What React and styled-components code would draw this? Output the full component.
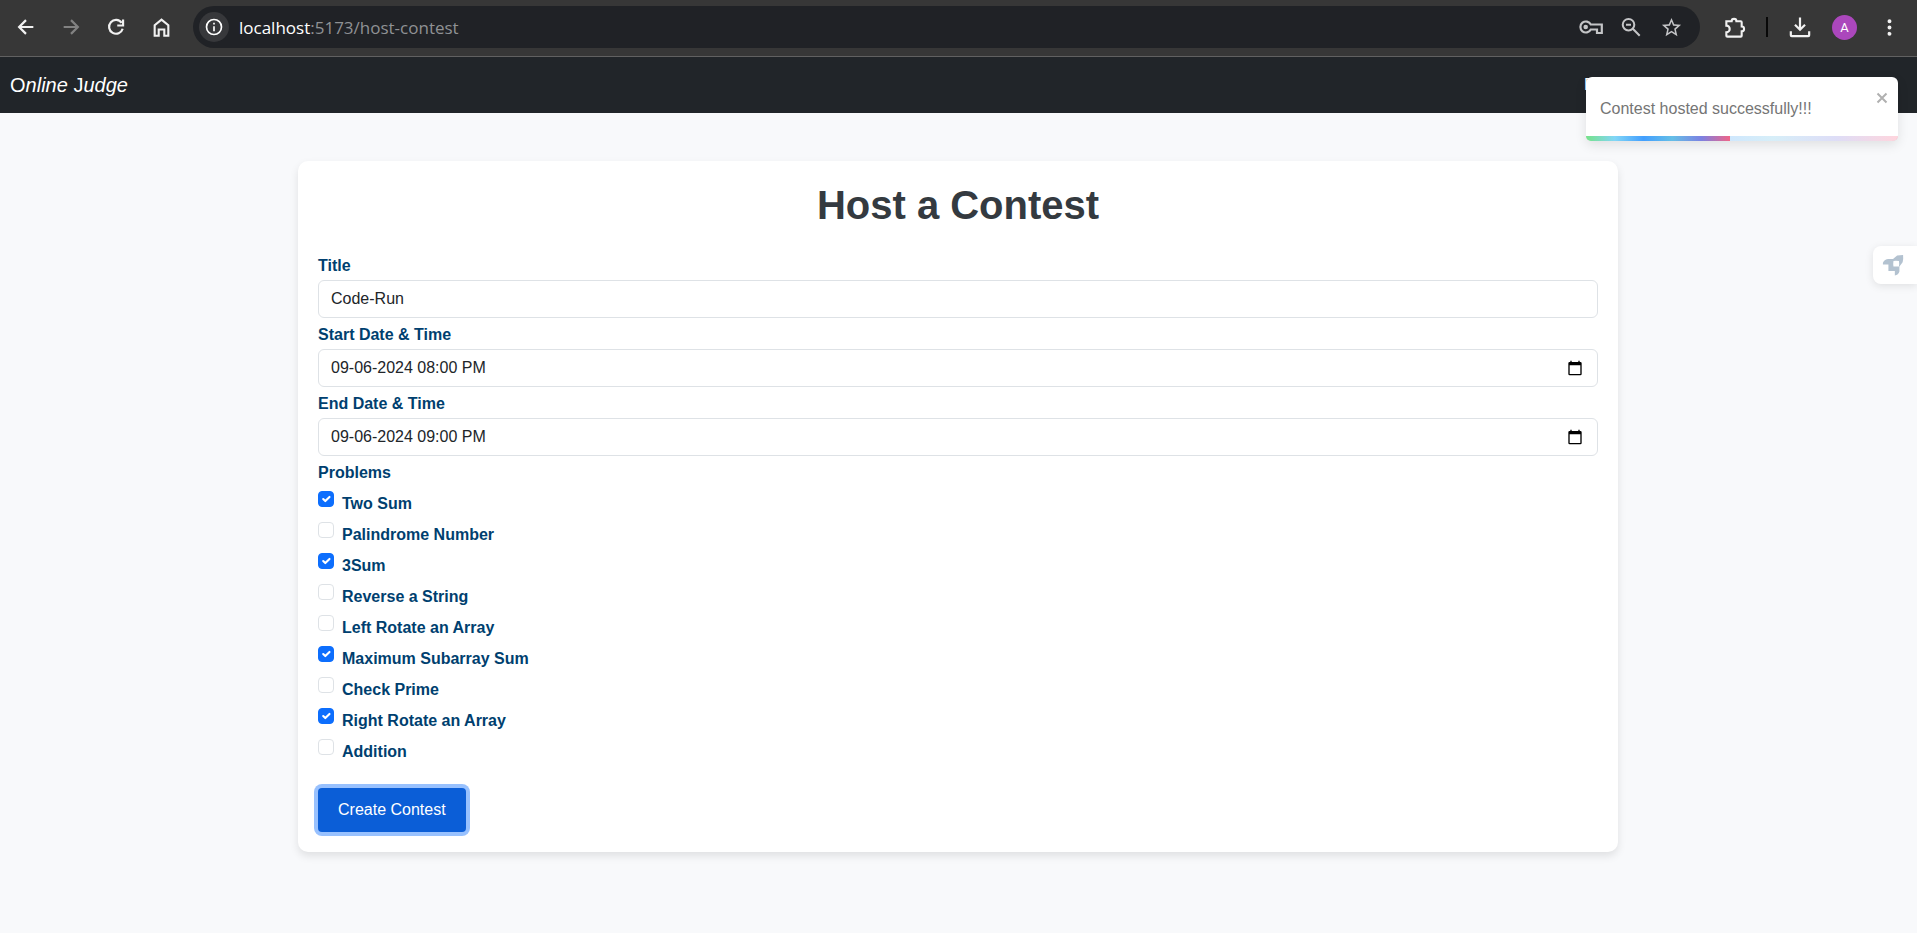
import React, { useState } from 'react';
import styled, { createGlobalStyle } from 'styled-components';

const GlobalStyle = createGlobalStyle`
  *, *::before, *::after { box-sizing: border-box; }
  body {
    margin: 0;
    background: #f8f9fb;
    color: #212529;
    font: 16px/24px "Liberation Sans", Arial, sans-serif;
  }
  button, input { font: inherit; }
`;

const Toolbar = styled.header`
  display: flex;
  align-items: center;
  height: 57px;
  padding: 6px 14px 8px 12px;
  background: #373737;
  border-bottom: 1px solid #616161;
`;

const IconButton = styled.button`
  display: grid;
  place-items: center;
  flex: none;
  width: 28px;
  height: 28px;
  padding: 0;
  border: 0;
  background: none;
  color: ${({ $color }) => $color || '#f1f1f1'};
`;

const Group = styled.div`
  display: flex;
  align-items: center;
  gap: ${({ $gap }) => $gap}px;
`;

const AddressBar = styled.div`
  display: flex;
  flex: 1;
  align-items: center;
  height: 42px;
  margin: 0 20px 0 18px;
  padding: 0 15px 0 6px;
  border-radius: 21px;
  background: #202226;
`;

const SiteInfo = styled.button`
  display: grid;
  place-items: center;
  width: 30px;
  height: 30px;
  padding: 0;
  border: 0;
  border-radius: 50%;
  background: #37383b;
  color: #fff;
`;

const Address = styled.div`
  flex: 1;
  margin-left: 10px;
  padding-top: 1px;
  color: #8f9194;
  font: 17px/24px "Open Sans", "Noto Sans", sans-serif;
  b { color: #fff; font-weight: 400; }
`;

const Divider = styled.span`
  width: 2px;
  height: 20px;
  background: #080808;
`;

const Avatar = styled.button`
  width: 25px;
  height: 25px;
  padding: 0;
  border: 0;
  border-radius: 50%;
  background: #ab47bc;
  color: #fff;
  font: 13px/25px Roboto, sans-serif;
`;

const Navbar = styled.nav`
  display: flex;
  align-items: center;
  justify-content: space-between;
  height: 56px;
  padding: 0 10px;
  background: #212529;
`;

const Brand = styled.a`
  color: #fff;
  font-size: 20px;
  line-height: 30px;
  text-decoration: none;
`;

const NavLinks = styled.div`
  width: 323px;
`;

const NavLink = styled.a`
  color: #fff;
  text-decoration: none;
`;

const Page = styled.main`
  padding: 48px 13px 80px 12px;
`;

const Card = styled.form`
  max-width: 1320px;
  margin: 0 auto;
  padding: 20px;
  border-radius: 10px;
  background: #fff;
  box-shadow: 0 4px 8px rgba(0, 0, 0, 0.1);
`;

const Heading = styled.h1`
  margin: 0 0 20px;
  color: #343a40;
  font-size: 40px;
  line-height: 48px;
  text-align: center;
`;

const Label = styled.label`
  display: block;
  padding: 5px 0 2px;
  color: #003f6f;
  font-weight: 700;
`;

const Problems = styled.fieldset`
  margin: 0 0 22px;
  padding: 0;
  border: 0;
`;

const Legend = styled(Label).attrs({ as: 'legend' })``;

const Field = styled.div`
  display: flex;
  align-items: center;
  height: 38px;
  padding-right: 12px;
  border: 1px solid #dee2e6;
  border-radius: 6px;
`;

const TextInput = styled.input`
  flex: 1;
  min-width: 0;
  padding: 0 12px;
  border: 0;
  outline: 0;
  background: none;
  color: #212529;
`;

const PickerButton = styled.button`
  display: grid;
  place-items: center;
  width: 20px;
  height: 20px;
  padding: 0;
  border: 0;
  background: none;
  color: #000;
`;

const CheckRow = styled.div`
  display: flex;
  gap: 8px;
`;

const Checkbox = styled.input.attrs({ type: 'checkbox' })`
  appearance: none;
  flex: none;
  width: 16px;
  height: 16px;
  margin: 4px 0 0;
  border: 1px solid #dee2e6;
  border-radius: 4px;
  background: #fff center / 14px no-repeat;
  &:checked {
    border-color: #0d6efd;
    background-color: #0d6efd;
    background-image: url("data:image/svg+xml,%3csvg xmlns='http://www.w3.org/2000/svg' viewBox='0 0 20 20'%3e%3cpath fill='none' stroke='%23fff' stroke-linecap='round' stroke-linejoin='round' stroke-width='3' d='m6 10 3 3 6-6'/%3e%3c/svg%3e");
  }
`;

const SubmitButton = styled.button`
  display: block;
  height: 44px;
  padding: 0 20px;
  border: 0;
  border-radius: 4px;
  background: #0b5ed7;
  box-shadow: 0 0 0 4px #98c1fe;
  color: #fff;
`;

const Toast = styled.div`
  position: absolute;
  top: 77px;
  right: 19px;
  width: 312px;
  height: 64px;
  border-radius: 6px;
  background: #fff;
  box-shadow: 0 4px 12px rgba(0, 0, 0, 0.1);
  color: #757575;
`;

const ToastBody = styled.div`
  padding: 20px 14px;
`;

const CloseButton = styled.button`
  position: absolute;
  top: 14px;
  right: 9px;
  display: grid;
  place-items: center;
  width: 14px;
  height: 14px;
  padding: 0;
  border: 0;
  background: none;
  color: #b0b0b0;
`;

const ProgressTrack = styled.div`
  position: absolute;
  bottom: 0;
  left: 0;
  width: 100%;
  height: 5px;
  overflow: hidden;
  border-radius: 0 0 6px 6px;
`;

const Progress = styled.div`
  position: absolute;
  inset: 0 auto 0 0;
  width: ${({ $width }) => $width};
  opacity: ${({ $opacity }) => $opacity};
  background: linear-gradient(to right, #4cd964, #5ac8fa, #007aff, #34aadc, #5856d6, #ff2d55);
`;

const SideTab = styled.button`
  position: absolute;
  top: 246px;
  right: 0;
  display: flex;
  align-items: center;
  width: 44px;
  height: 38px;
  padding: 0 9px;
  border: 0;
  border-radius: 8px 0 0 8px;
  background: #fff;
  box-shadow: 0 2px 8px rgba(0, 0, 0, 0.1);
  color: #b3c2d0;
`;

const SOLID = {
  info: 'M11 7h2v2h-2zm0 4h2v6h-2zm1-9a10 10 0 1 0 0 20 10 10 0 0 0 0-20zm0 18a8 8 0 1 1 0-16 8 8 0 0 1 0 16z',
  star: 'm22 9.24-7.19-.62L12 2 9.19 8.63 2 9.24l5.46 4.73L5.82 21 12 17.27 18.18 21l-1.63-7.03zM12 15.4l-3.76 2.27 1-4.28-3.32-2.88 4.38-.38L12 6.1l1.71 4.04 4.38.38-3.32 2.88 1 4.28z',
  more: 'M12 7.8a1.9 1.9 0 1 0 0-3.8 1.9 1.9 0 0 0 0 3.8zm0 2.3a1.9 1.9 0 1 0 0 3.8 1.9 1.9 0 0 0 0-3.8zm0 6.1a1.9 1.9 0 1 0 0 3.8 1.9 1.9 0 0 0 0-3.8z',
  calendar: 'M20 3h-1V1h-2v2H7V1H5v2H4a2 2 0 0 0-2 2v16a2 2 0 0 0 2 2h16a2 2 0 0 0 2-2V5a2 2 0 0 0-2-2zm0 18H4V8h16z',
  rocket: 'M1 9.500Q3 5.500 7 5.500H12L16.500 1.500Q19 1 23 1Q23.500 6 22.500 9L19 13.500V19Q18 22.500 14 23.500V18.500H7V11.500H1zM12.500 7.500Q12 10.500 12.500 13.500Q15 14 18.500 13.500Q19 10.500 18.500 7.500Q15 7 12.500 7.500z',
};

const OUTLINE = {
  back: 'M20 12H5M12 4.5 4.5 12l7.5 7.5',
  forward: 'M4 12h15M12 4.5l7.5 7.5-7.5 7.5',
  reload: 'M18.8 7A8.3 8.3 0 1 0 20 14M20.5 3v7.2H13.5',
  home: 'M4.2 21.5V9.3L12 3l7.8 6.3v12.2h-4.6v-7.3H8.8v7.3z',
  key: 'M11.8 9.5H22.8V18H18V14.5H11.8A5.5 5.5 0 1 1 11.8 9.5zM5.5 12a1.2 1.2 0 1 0 2.4 0 1.2 1.2 0 1 0-2.4 0z',
  zoomOut: 'M3 9.5a6.3 6.3 0 1 0 12.6 0 6.3 6.3 0 1 0-12.6 0zM14 14l7.5 7.5M6.5 9.5h5.5',
  download: 'M12 1.5V15M6.5 9.5 12 15l5.5-5.5M2 16.5V21q0 1 1 1h18q1 0 1-1v-4.5',
  close: 'M3 3l18 18M21 3 3 21',
  puzzle: 'M3.5 5.5H9a2.3 2.3 0 0 1 5 0h4.5q1 0 1 1V11a2.3 2.3 0 0 1 0 5v4.5q0 1-1 1h-14q-1 0-1-1V17a3.2 3.2 0 0 0 0-7z',
};

function Icon({ name, size = 22, weight = 2.4 }) {
  const solid = SOLID[name];
  return (
    <svg width={size} height={size} viewBox="0 0 24 24" aria-hidden="true">
      {solid
        ? <path d={solid} fill="currentColor" fillRule="evenodd" />
        : <path d={OUTLINE[name]} fill="none" stroke="currentColor" strokeWidth={weight} />}
    </svg>
  );
}

const PROBLEMS = [
  ['Two Sum', true],
  ['Palindrome Number', false],
  ['3Sum', true],
  ['Reverse a String', false],
  ['Left Rotate an Array', false],
  ['Maximum Subarray Sum', true],
  ['Check Prime', false],
  ['Right Rotate an Array', true],
  ['Addition', false],
];

function DateField({ id, label, value }) {
  return (
    <>
      <Label htmlFor={id}>{label}</Label>
      <Field>
        <TextInput id={id} defaultValue={value} />
        <PickerButton type="button" aria-label={`Pick ${label}`}><Icon name="calendar" size={16} /></PickerButton>
      </Field>
    </>
  );
}

export default function App() {
  const [open, setOpen] = useState(true);
  return (
    <>
      <GlobalStyle />
      <Toolbar>
        <Group $gap={17}>
          <IconButton aria-label="Back"><Icon name="back" /></IconButton>
          <IconButton aria-label="Forward" $color="#828282"><Icon name="forward" /></IconButton>
          <IconButton aria-label="Reload"><Icon name="reload" size={20} weight={2.6} /></IconButton>
          <IconButton aria-label="Home"><Icon name="home" size={21} /></IconButton>
        </Group>
        <AddressBar>
          <SiteInfo aria-label="Site information"><Icon name="info" size={20} /></SiteInfo>
          <Address><b>localhost</b>:5173/host-contest</Address>
          <Group $gap={12}>
            <IconButton aria-label="Passwords" $color="#c4c5c7"><Icon name="key" size={24} weight={2.2} /></IconButton>
            <IconButton aria-label="Zoom" $color="#c4c5c7"><Icon name="zoomOut" size={22} weight={2.2} /></IconButton>
            <IconButton aria-label="Bookmark" $color="#c4c5c7"><Icon name="star" size={23} /></IconButton>
          </Group>
        </AddressBar>
        <Group $gap={18}>
          <IconButton aria-label="Extensions"><Icon name="puzzle" size={23} weight={2.2} /></IconButton>
          <Divider />
          <IconButton aria-label="Downloads"><Icon name="download" size={22} /></IconButton>
          <Avatar aria-label="Profile">A</Avatar>
          <IconButton aria-label="Menu"><Icon name="more" size={25} /></IconButton>
        </Group>
      </Toolbar>

      <Navbar>
        <Brand href="#">O<i>nline</i> J<i>udge</i></Brand>
        <NavLinks><NavLink href="#">Problems</NavLink></NavLinks>
      </Navbar>

      <Page>
        <Card onSubmit={(e) => e.preventDefault()}>
          <Heading>Host a Contest</Heading>
          <Label htmlFor="title">Title</Label>
          <Field><TextInput id="title" defaultValue="Code-Run" /></Field>
          <DateField id="start" label="Start Date & Time" value="09-06-2024 08:00 PM" />
          <DateField id="end" label="End Date & Time" value="09-06-2024 09:00 PM" />
          <Problems>
            <Legend>Problems</Legend>
            {PROBLEMS.map(([name, checked], i) => (
              <CheckRow key={name}>
                <Checkbox id={`problem-${i}`} defaultChecked={checked} />
                <Label htmlFor={`problem-${i}`}>{name}</Label>
              </CheckRow>
            ))}
          </Problems>
          <SubmitButton type="submit">Create Contest</SubmitButton>
        </Card>
      </Page>

      {open && (
        <Toast role="alert">
          <ToastBody>Contest hosted successfully!!!</ToastBody>
          <CloseButton aria-label="Close" onClick={() => setOpen(false)}><Icon name="close" size={12} weight={4} /></CloseButton>
          <ProgressTrack>
            <Progress $width="100%" $opacity={0.2} />
            <Progress $width="46%" $opacity={0.7} />
          </ProgressTrack>
        </Toast>
      )}
      <SideTab aria-label="Quick launch"><Icon name="rocket" size={22} /></SideTab>
    </>
  );
}
